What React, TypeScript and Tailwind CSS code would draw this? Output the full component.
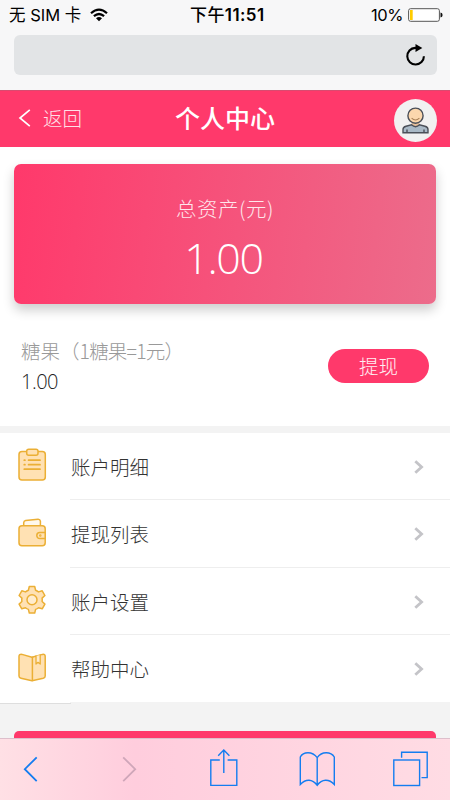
import React from "react";

const cjk = "font-['Noto_Sans_CJK_SC',sans-serif]";

const iconStroke = {
  stroke: "#EBAF35",
  strokeWidth: 1.5,
  strokeLinejoin: "round" as const,
  strokeLinecap: "round" as const,
};

const ClipboardIcon = () => (
  <svg width="32" height="36" viewBox="0 0 32 36" fill="#FFE1B3" {...iconStroke}>
    <rect x="3" y="3.6" width="26.3" height="28.4" rx="3" />
    <rect x="10.7" y="1.2" width="11.3" height="6" rx="2" />
    <path d="M8.3 12.2h.6M8.3 16.7h.6M8.3 21.2h.6M12.6 12.2h11.4M12.6 16.7h11.4M8.3 21.2h15.7" strokeWidth="1.8" />
  </svg>
);

const WalletIcon = () => (
  <svg width="32" height="36" viewBox="0 0 32 36" fill="#FFE1B3" {...iconStroke}>
    <path d="M7.7 10V6.8Q7.8 4.9 9.6 4.6L22 3.2Q24.1 3.1 24.4 5.2V10" fill="#FFF8EC" />
    <rect x="3" y="9.8" width="26.2" height="19.9" rx="3" />
    <path d="M29.2 16.6H23.8a3 3 0 0 0 0 6H29.2Z" />
    <circle cx="24.3" cy="19.6" r=".5" />
  </svg>
);

const GearIcon = () => (
  <svg width="32" height="36" viewBox="0 0 32 36" fill="#FFE1B3" {...iconStroke}>
    <path
      transform="translate(16 16.8)"
      d="M-3.6-9.6L-2.7-13.3H2.7L3.6-9.6Q5.2-9 6.5-7.9L10.2-9L12.9-4.3L10.1-1.7Q10.4 0 10.1 1.7L12.9 4.3L10.2 9L6.5 7.9Q5.2 9 3.6 9.6L2.7 13.3H-2.7L-3.6 9.6Q-5.2 9-6.5 7.9L-10.2 9L-12.9 4.3L-10.1 1.7Q-10.4 0-10.1-1.7L-12.9-4.3L-10.2-9L-6.5-7.9Q-5.2-9-3.6-9.6Z"
    />
    <circle cx="16" cy="16.8" r="5" fill="#FFECCD" />
  </svg>
);

const BookIcon = () => (
  <svg width="32" height="36" viewBox="0 0 32 36" fill="#FFE1B3" {...iconStroke}>
    <path d="M16 6.2L6 3.4Q3 2.9 3 5.5V25Q3 26.8 5 27.3L16 29.8L27.2 27.3Q29.2 26.8 29.2 25V5.5Q29.2 2.9 26.4 3.4Z" />
    <path d="M16.4 6.2V29.6" />
    <path d="M20 5V13L22 11.3L24.2 13V4" fill="#FFECCD" strokeWidth="1.3" />
  </svg>
);

const menu = [
  { label: "账户明细", icon: <ClipboardIcon /> },
  { label: "提现列表", icon: <WalletIcon /> },
  { label: "账户设置", icon: <GearIcon /> },
  { label: "帮助中心", icon: <BookIcon /> },
];

const StatusBar = () => (
  <div className="relative flex h-[30px] items-center justify-between pl-[9px] pr-[7px] text-black">
    <div className="flex items-center">
      <span className="font-['Inter','Noto_Sans_CJK_SC',sans-serif] text-[16.5px] leading-[30px]">无 SIM 卡</span>
      <svg className="ml-[9px]" width="18" height="14" viewBox="0 0 18 14" fill="none" stroke="#000" strokeWidth="2.2">
        <path d="M1 5.2Q9-2 17 5.2" />
        <path d="M3.9 8.2Q9 3.8 14.1 8.2" />
        <path d="M6 10.3Q9 7.8 12 10.3L9 13.3Z" fill="#000" stroke="none" />
      </svg>
    </div>
    <span className="absolute left-[190px] whitespace-nowrap font-['Inter','Noto_Sans_CJK_SC',sans-serif] text-[17px] font-semibold leading-[30px] tracking-[0.4px]">
      <span className="font-medium">下午</span>11:51
    </span>
    <div className="flex items-center gap-[5px]">
      <span className="font-['Inter',sans-serif] text-[16.5px] leading-[30px] tracking-[-0.4px]">10%</span>
      <svg width="35" height="14" viewBox="0 0 35 14">
        <rect x=".6" y=".7" width="30.8" height="12.6" rx="2" fill="#fff" stroke="#555" />
        <rect x="2" y="2" width="2.7" height="10" fill="#FFCC00" />
        <path d="M32.5 4.5Q34.6 4.8 34.6 7T32.5 9.5Z" fill="#111" />
      </svg>
    </div>
  </div>
);

const Avatar = () => (
  <div className="h-[43px] w-[43px] overflow-hidden rounded-full bg-[#F1F1F1]">
    <svg width="43" height="43" viewBox="0 0 43 43" stroke="#4B5059" strokeWidth="1.4">
      <path d="M17.5 24H25.5V28H17.5Z" fill="#E8C09A" stroke="none" />
      <path d="M9 33.8V30.5Q9 28 12 27.2L17.5 25.8Q21.5 29.5 25.5 25.8L31 27.2Q34 28 34 30.5V33.8Z" fill="#A9B9C6" />
      <path d="M13 30.5V33.8M30 30.5V33.8" />
      <circle cx="21.5" cy="16.7" r="7.6" fill="#FBD7AD" />
      <path d="M17.6 19.2Q21.5 22.8 25.4 19.2" fill="none" stroke="#A98156" strokeWidth="1.1" />
    </svg>
  </div>
);

const Toolbar = () => (
  <nav className="h-[62px] border-t border-[#DDBFCB] bg-linear-to-r from-[#FFE0E5] via-[#FFCDDD] via-30% to-[#FFDCE4]">
    <svg width="450" height="61" viewBox="0 739 450 61" fill="none" stroke="#147DF0" strokeWidth="1.4">
      <path d="M36.7 757.3L24.8 769.2L36.7 781.2" strokeWidth="1.8" />
      <path d="M123.2 757.3L135.2 769.2L123.2 781.2" stroke="#CFA6B9" strokeWidth="1.8" />
      <path d="M219.8 760H210.8V785.4H236.8V760H227.6" />
      <path d="M223.8 773V750M218.2 755.8L223.8 750L229.4 755.8" />
      <path d="M317.2 757.7Q313.5 752.8 308 752.8T300.3 757V784.4Q304.5 780 309 780.2T317.2 785.3Q320.8 780.4 325.5 780.2T334.3 784.4V757Q331.8 752.8 326.2 752.8T317.2 757.7V785.3" />
      <rect x="393.8" y="760" width="25.8" height="25.5" />
      <path d="M401.6 757.8V752.3H427.2V777.6H421.5" />
    </svg>
  </nav>
);

export default function App() {
  return (
    <div className={`flex h-[800px] w-[450px] flex-col overflow-hidden bg-[#F3F3F3] ${cjk}`}>
      <div className="h-[90px] shrink-0 bg-[#F7F7F8]">
        <StatusBar />
        <div className="mx-[13.5px] mt-[5px] flex h-10 items-center justify-end rounded-md bg-[#E2E4E6] pr-[11px]">
          <svg width="21" height="23" viewBox="0 0 21 23" fill="none" stroke="#000" strokeWidth="2.1">
            <path d="M11.5 3.9H10.2A8.3 8.3 0 1 0 18.9 12.2" />
            <path d="M10.5 0L17.3 3.9L10.5 8Z" fill="#000" stroke="none" />
          </svg>
        </div>
      </div>

      <header className="relative flex h-[57px] shrink-0 items-center justify-between border-t border-[#D94B70] bg-[#FF396B] pl-[18px] pr-[13.5px] text-white">
        <div className="flex items-center gap-[12px] pb-[3px]">
          <svg width="13" height="18" viewBox="0 0 13 18" fill="none" stroke="currentColor" strokeWidth="1.7">
            <path d="M11.8 .8L2 9L11.8 17.2" />
          </svg>
          <span className="text-[19.5px] font-light leading-none text-[#FFE0E8]">返回</span>
        </div>
        <h1 className="absolute left-[175px] top-[11px] text-[25px] font-medium leading-[30px]">个人中心</h1>
        <div className="pt-[2px]">
          <Avatar />
        </div>
      </header>

      <section className="h-[278.5px] shrink-0 bg-white pt-[16.5px]">
        <div className="mx-[14px] flex h-[140.5px] flex-col items-center rounded-[7px] bg-linear-[97deg] from-[#FF396B] to-[#EC6C8B] text-white shadow-[0_6px_12px_rgba(0,0,0,0.2)]">
          <div className="mt-[29px] text-[20.5px] font-light leading-[30px] tracking-[0.5px] text-[#FFE6EC]">总资产(元)</div>
          <div className="mt-[13px] pr-[3px] font-['Open_Sans',sans-serif] text-[43px] font-light leading-[44px] tracking-[-1.4px]">1.00</div>
        </div>
        <div className="flex items-start justify-between pl-[21px] pr-[21px] pt-[34px]">
          <div>
            <div className="text-[19.5px] font-light leading-[26px] text-[#999]">
              糖果（<span className="tracking-[-0.8px]">1糖果=1元</span>）
            </div>
            <div className="mt-1 font-['Open_Sans',sans-serif] text-[20px] font-light leading-[28px] tracking-[-0.5px] text-[#222]">1.00</div>
          </div>
          <button className="mt-[11px] h-[34px] w-[101px] rounded-full bg-[#FF396B] text-[19.5px] font-light leading-[34px] text-[#FFEEF2]">
            提现
          </button>
        </div>
      </section>

      <ul className="mt-[7px] h-[270px] shrink-0 bg-white">
        {menu.map((item) => (
          <li key={item.label} className="group flex h-[67.5px] items-center pl-4">
            {item.icon}
            <div className="ml-[22px] flex h-full flex-1 items-center justify-between border-b border-[#EEEEEE] pr-[25px] pt-[2px] group-last:border-[#F3F3F3]">
              <span className="pl-px text-[19.5px] font-light leading-[30px] text-[#333]">{item.label}</span>
              <svg width="12" height="16" viewBox="0 0 12 16" fill="none" stroke="#C4C4C8" strokeWidth="2.8">
                <path d="M2.3 2.2L8.6 8L2.3 13.8" />
              </svg>
            </div>
          </li>
        ))}
      </ul>

      <div className="h-px w-[71px] shrink-0 bg-[#DEDEDE]" />
      <div className="flex h-[34.5px] shrink-0 items-end px-[14px]">
        <div className="h-[7px] w-full rounded-t-[5px] bg-[#FF396B]" />
      </div>
      <Toolbar />
    </div>
  );
}
